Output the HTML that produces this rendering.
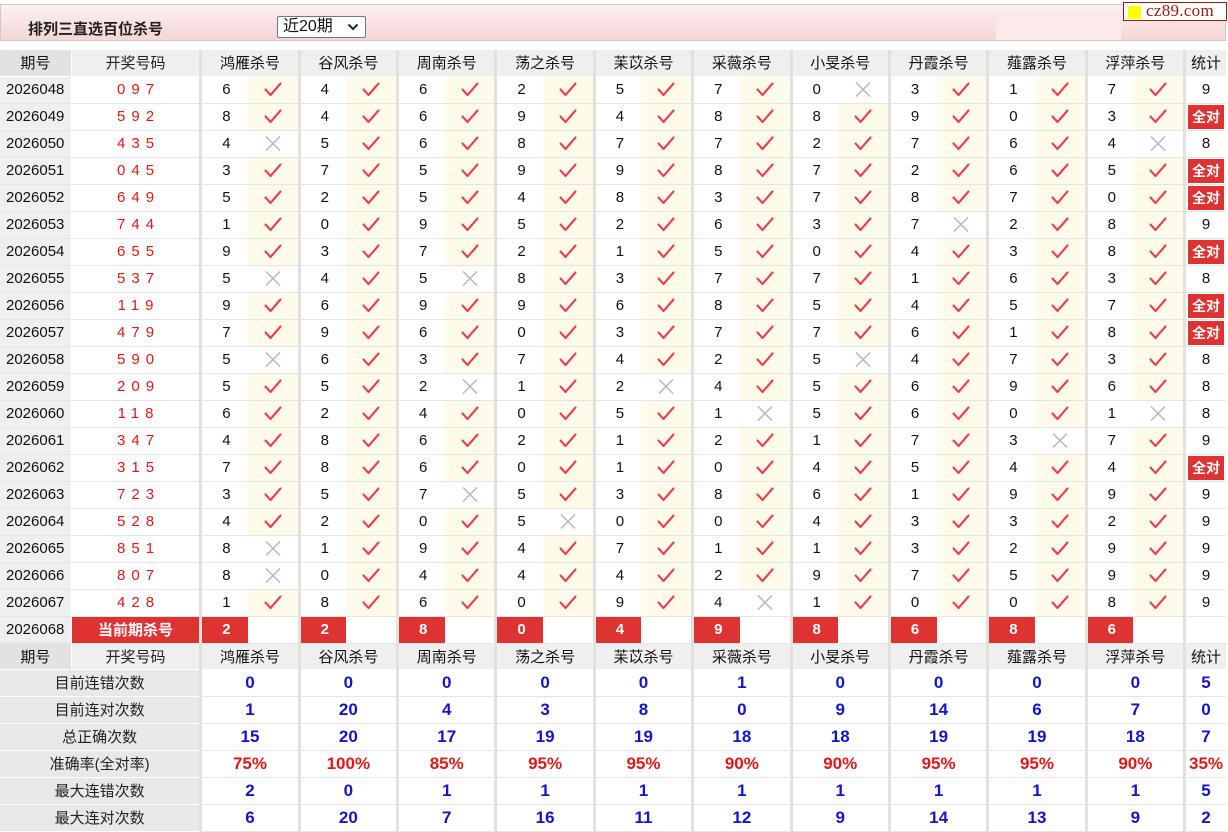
<!DOCTYPE html>
<html><head><meta charset="utf-8">
<style>
*{margin:0;padding:0;box-sizing:border-box}
body{width:1228px;height:831px;overflow:hidden;background:#fff;font-family:"Liberation Sans","Noto Sans CJK SC",sans-serif;color:#111;position:relative}
.bar{position:absolute;left:0;top:4px;width:1226px;height:37px;border:1px solid #d0c8c8;background:linear-gradient(#fdf0f0,#f4d6d6)}
.title{position:absolute;left:27px;top:13px;font-size:15px;font-weight:bold;color:#222}
.sel{position:absolute;left:276px;top:11px;width:89px;height:22px;border:1px solid #777;background:#fff;font-size:16px;padding-left:5px;line-height:20px;border-radius:2px}
.sel svg{position:absolute;right:6px;top:6px}
.pale{position:absolute;left:995px;top:14px;width:125px;height:21px;background:#fbeaea}
.logo{position:absolute;left:1123px;top:2px;width:104px;height:19px;border:1px solid #a01818;background:#fff;font-family:"Liberation Serif",serif;font-size:17px;color:#a01818;line-height:16px;padding-left:22px;letter-spacing:.3px}
.logo i{position:absolute;left:4px;top:3px;width:13px;height:13px;background:#ff0}
table{position:absolute;left:0;top:50px;border-collapse:collapse;table-layout:fixed;width:1226px}
td{height:27px;border-bottom:1px solid #e4e4e4;text-align:center;font-size:15px;padding:0;overflow:hidden;white-space:nowrap}
tr.h td{height:26px;background:#efefef;border-bottom:1px solid #fff}
tr.h td.p{background:#e2e2e2}
td.p{background:#efefef;text-align:left;padding-left:6px;font-size:15px}
tr.h td.p{text-align:center;padding-left:0}
td.c{color:#e01818;letter-spacing:6px;text-indent:6px;border-left:1px solid #fff}
td.n{border-left:3px solid #e2e2dc;text-align:left;padding-left:20px}
tr.h td.n{text-align:center;padding-left:0}
td.m{background:#fefbea}
td.w{background:#fff}
td.s{border-left:3px solid #e2e2dc}
td.r span{display:block;background:#d33;color:#fff;font-weight:bold;height:24px;line-height:24px;margin:0 2px;font-size:14px}
tr.cur td{background:#fff}
tr.cur td.p{background:#efefef}
tr.cur td.c{background:#d33;color:#fff;font-weight:bold;letter-spacing:0;text-indent:0;font-size:15px}
tr.cur td.n{background:#d33;color:#fff;font-weight:bold}
tr.st td{font-weight:bold;color:#1414c8;font-size:17px;border-bottom:1px solid #e4e4e4}
tr.st td.l{background:#e8e8e8;color:#222;font-weight:normal;font-size:15px;border-bottom:1px solid #fff}
tr.st td.n{text-align:center;padding-left:0}
tr.pct td{color:#e01818}
tr.pct td.l{color:#222}
svg.k{display:block;margin:0 auto}
</style></head><body>
<svg width="0" height="0" style="position:absolute"><defs>
<symbol id="v" viewBox="0 0 20 17"><path d="M2.5 8.5 L7.5 14 L17.5 2.5" fill="none" stroke="#e8404e" stroke-width="2.1" stroke-linecap="round" stroke-linejoin="round"/></symbol>
<symbol id="x" viewBox="0 0 20 17"><path d="M3 1.5 L17 15.5 M17 1.5 L3 15.5" fill="none" stroke="#b8b8b8" stroke-width="1.5"/></symbol>
</defs></svg>
<div class="bar"><div class="title">排列三直选百位杀号</div><div class="sel">近20期<svg width="12" height="8" viewBox="0 0 12 8"><path d="M1.5 1.5 L6 6 L10.5 1.5" fill="none" stroke="#222" stroke-width="2"/></svg></div><div class="pale"></div></div>
<div class="logo"><i></i>cz89.com</div>
<table>
<colgroup><col style="width:71px"><col style="width:129px"><col style="width:47px"><col style="width:51px"><col style="width:47px"><col style="width:51px"><col style="width:47px"><col style="width:51px"><col style="width:47px"><col style="width:51px"><col style="width:47px"><col style="width:51px"><col style="width:47px"><col style="width:51px"><col style="width:47px"><col style="width:51px"><col style="width:47px"><col style="width:51px"><col style="width:47px"><col style="width:51px"><col style="width:47px"><col style="width:51px"><col style="width:41px"></colgroup>
<tr class="h"><td class="p">期号</td><td class="c" style="color:#222;letter-spacing:0;text-indent:0">开奖号码</td><td class="n" colspan="2">鸿雁杀号</td><td class="n" colspan="2">谷风杀号</td><td class="n" colspan="2">周南杀号</td><td class="n" colspan="2">荡之杀号</td><td class="n" colspan="2">苿苡杀号</td><td class="n" colspan="2">采薇杀号</td><td class="n" colspan="2">小旻杀号</td><td class="n" colspan="2">丹霞杀号</td><td class="n" colspan="2">薤露杀号</td><td class="n" colspan="2">浮萍杀号</td><td class="s">统计</td></tr>
<tr><td class="p">2026048</td><td class="c">097</td><td class="n">6</td><td class="m"><svg class="k" width="20" height="17"><use href="#v"/></svg></td><td class="n">4</td><td class="m"><svg class="k" width="20" height="17"><use href="#v"/></svg></td><td class="n">6</td><td class="m"><svg class="k" width="20" height="17"><use href="#v"/></svg></td><td class="n">2</td><td class="m"><svg class="k" width="20" height="17"><use href="#v"/></svg></td><td class="n">5</td><td class="m"><svg class="k" width="20" height="17"><use href="#v"/></svg></td><td class="n">7</td><td class="m"><svg class="k" width="20" height="17"><use href="#v"/></svg></td><td class="n">0</td><td class="w"><svg class="k" width="20" height="17"><use href="#x"/></svg></td><td class="n">3</td><td class="m"><svg class="k" width="20" height="17"><use href="#v"/></svg></td><td class="n">1</td><td class="m"><svg class="k" width="20" height="17"><use href="#v"/></svg></td><td class="n">7</td><td class="m"><svg class="k" width="20" height="17"><use href="#v"/></svg></td><td class="s">9</td></tr>
<tr><td class="p">2026049</td><td class="c">592</td><td class="n">8</td><td class="m"><svg class="k" width="20" height="17"><use href="#v"/></svg></td><td class="n">4</td><td class="m"><svg class="k" width="20" height="17"><use href="#v"/></svg></td><td class="n">6</td><td class="m"><svg class="k" width="20" height="17"><use href="#v"/></svg></td><td class="n">9</td><td class="m"><svg class="k" width="20" height="17"><use href="#v"/></svg></td><td class="n">4</td><td class="m"><svg class="k" width="20" height="17"><use href="#v"/></svg></td><td class="n">8</td><td class="m"><svg class="k" width="20" height="17"><use href="#v"/></svg></td><td class="n">8</td><td class="m"><svg class="k" width="20" height="17"><use href="#v"/></svg></td><td class="n">9</td><td class="m"><svg class="k" width="20" height="17"><use href="#v"/></svg></td><td class="n">0</td><td class="m"><svg class="k" width="20" height="17"><use href="#v"/></svg></td><td class="n">3</td><td class="m"><svg class="k" width="20" height="17"><use href="#v"/></svg></td><td class="s r"><span>全对</span></td></tr>
<tr><td class="p">2026050</td><td class="c">435</td><td class="n">4</td><td class="w"><svg class="k" width="20" height="17"><use href="#x"/></svg></td><td class="n">5</td><td class="m"><svg class="k" width="20" height="17"><use href="#v"/></svg></td><td class="n">6</td><td class="m"><svg class="k" width="20" height="17"><use href="#v"/></svg></td><td class="n">8</td><td class="m"><svg class="k" width="20" height="17"><use href="#v"/></svg></td><td class="n">7</td><td class="m"><svg class="k" width="20" height="17"><use href="#v"/></svg></td><td class="n">7</td><td class="m"><svg class="k" width="20" height="17"><use href="#v"/></svg></td><td class="n">2</td><td class="m"><svg class="k" width="20" height="17"><use href="#v"/></svg></td><td class="n">7</td><td class="m"><svg class="k" width="20" height="17"><use href="#v"/></svg></td><td class="n">6</td><td class="m"><svg class="k" width="20" height="17"><use href="#v"/></svg></td><td class="n">4</td><td class="w"><svg class="k" width="20" height="17"><use href="#x"/></svg></td><td class="s">8</td></tr>
<tr><td class="p">2026051</td><td class="c">045</td><td class="n">3</td><td class="m"><svg class="k" width="20" height="17"><use href="#v"/></svg></td><td class="n">7</td><td class="m"><svg class="k" width="20" height="17"><use href="#v"/></svg></td><td class="n">5</td><td class="m"><svg class="k" width="20" height="17"><use href="#v"/></svg></td><td class="n">9</td><td class="m"><svg class="k" width="20" height="17"><use href="#v"/></svg></td><td class="n">9</td><td class="m"><svg class="k" width="20" height="17"><use href="#v"/></svg></td><td class="n">8</td><td class="m"><svg class="k" width="20" height="17"><use href="#v"/></svg></td><td class="n">7</td><td class="m"><svg class="k" width="20" height="17"><use href="#v"/></svg></td><td class="n">2</td><td class="m"><svg class="k" width="20" height="17"><use href="#v"/></svg></td><td class="n">6</td><td class="m"><svg class="k" width="20" height="17"><use href="#v"/></svg></td><td class="n">5</td><td class="m"><svg class="k" width="20" height="17"><use href="#v"/></svg></td><td class="s r"><span>全对</span></td></tr>
<tr><td class="p">2026052</td><td class="c">649</td><td class="n">5</td><td class="m"><svg class="k" width="20" height="17"><use href="#v"/></svg></td><td class="n">2</td><td class="m"><svg class="k" width="20" height="17"><use href="#v"/></svg></td><td class="n">5</td><td class="m"><svg class="k" width="20" height="17"><use href="#v"/></svg></td><td class="n">4</td><td class="m"><svg class="k" width="20" height="17"><use href="#v"/></svg></td><td class="n">8</td><td class="m"><svg class="k" width="20" height="17"><use href="#v"/></svg></td><td class="n">3</td><td class="m"><svg class="k" width="20" height="17"><use href="#v"/></svg></td><td class="n">7</td><td class="m"><svg class="k" width="20" height="17"><use href="#v"/></svg></td><td class="n">8</td><td class="m"><svg class="k" width="20" height="17"><use href="#v"/></svg></td><td class="n">7</td><td class="m"><svg class="k" width="20" height="17"><use href="#v"/></svg></td><td class="n">0</td><td class="m"><svg class="k" width="20" height="17"><use href="#v"/></svg></td><td class="s r"><span>全对</span></td></tr>
<tr><td class="p">2026053</td><td class="c">744</td><td class="n">1</td><td class="m"><svg class="k" width="20" height="17"><use href="#v"/></svg></td><td class="n">0</td><td class="m"><svg class="k" width="20" height="17"><use href="#v"/></svg></td><td class="n">9</td><td class="m"><svg class="k" width="20" height="17"><use href="#v"/></svg></td><td class="n">5</td><td class="m"><svg class="k" width="20" height="17"><use href="#v"/></svg></td><td class="n">2</td><td class="m"><svg class="k" width="20" height="17"><use href="#v"/></svg></td><td class="n">6</td><td class="m"><svg class="k" width="20" height="17"><use href="#v"/></svg></td><td class="n">3</td><td class="m"><svg class="k" width="20" height="17"><use href="#v"/></svg></td><td class="n">7</td><td class="w"><svg class="k" width="20" height="17"><use href="#x"/></svg></td><td class="n">2</td><td class="m"><svg class="k" width="20" height="17"><use href="#v"/></svg></td><td class="n">8</td><td class="m"><svg class="k" width="20" height="17"><use href="#v"/></svg></td><td class="s">9</td></tr>
<tr><td class="p">2026054</td><td class="c">655</td><td class="n">9</td><td class="m"><svg class="k" width="20" height="17"><use href="#v"/></svg></td><td class="n">3</td><td class="m"><svg class="k" width="20" height="17"><use href="#v"/></svg></td><td class="n">7</td><td class="m"><svg class="k" width="20" height="17"><use href="#v"/></svg></td><td class="n">2</td><td class="m"><svg class="k" width="20" height="17"><use href="#v"/></svg></td><td class="n">1</td><td class="m"><svg class="k" width="20" height="17"><use href="#v"/></svg></td><td class="n">5</td><td class="m"><svg class="k" width="20" height="17"><use href="#v"/></svg></td><td class="n">0</td><td class="m"><svg class="k" width="20" height="17"><use href="#v"/></svg></td><td class="n">4</td><td class="m"><svg class="k" width="20" height="17"><use href="#v"/></svg></td><td class="n">3</td><td class="m"><svg class="k" width="20" height="17"><use href="#v"/></svg></td><td class="n">8</td><td class="m"><svg class="k" width="20" height="17"><use href="#v"/></svg></td><td class="s r"><span>全对</span></td></tr>
<tr><td class="p">2026055</td><td class="c">537</td><td class="n">5</td><td class="w"><svg class="k" width="20" height="17"><use href="#x"/></svg></td><td class="n">4</td><td class="m"><svg class="k" width="20" height="17"><use href="#v"/></svg></td><td class="n">5</td><td class="w"><svg class="k" width="20" height="17"><use href="#x"/></svg></td><td class="n">8</td><td class="m"><svg class="k" width="20" height="17"><use href="#v"/></svg></td><td class="n">3</td><td class="m"><svg class="k" width="20" height="17"><use href="#v"/></svg></td><td class="n">7</td><td class="m"><svg class="k" width="20" height="17"><use href="#v"/></svg></td><td class="n">7</td><td class="m"><svg class="k" width="20" height="17"><use href="#v"/></svg></td><td class="n">1</td><td class="m"><svg class="k" width="20" height="17"><use href="#v"/></svg></td><td class="n">6</td><td class="m"><svg class="k" width="20" height="17"><use href="#v"/></svg></td><td class="n">3</td><td class="m"><svg class="k" width="20" height="17"><use href="#v"/></svg></td><td class="s">8</td></tr>
<tr><td class="p">2026056</td><td class="c">119</td><td class="n">9</td><td class="m"><svg class="k" width="20" height="17"><use href="#v"/></svg></td><td class="n">6</td><td class="m"><svg class="k" width="20" height="17"><use href="#v"/></svg></td><td class="n">9</td><td class="m"><svg class="k" width="20" height="17"><use href="#v"/></svg></td><td class="n">9</td><td class="m"><svg class="k" width="20" height="17"><use href="#v"/></svg></td><td class="n">6</td><td class="m"><svg class="k" width="20" height="17"><use href="#v"/></svg></td><td class="n">8</td><td class="m"><svg class="k" width="20" height="17"><use href="#v"/></svg></td><td class="n">5</td><td class="m"><svg class="k" width="20" height="17"><use href="#v"/></svg></td><td class="n">4</td><td class="m"><svg class="k" width="20" height="17"><use href="#v"/></svg></td><td class="n">5</td><td class="m"><svg class="k" width="20" height="17"><use href="#v"/></svg></td><td class="n">7</td><td class="m"><svg class="k" width="20" height="17"><use href="#v"/></svg></td><td class="s r"><span>全对</span></td></tr>
<tr><td class="p">2026057</td><td class="c">479</td><td class="n">7</td><td class="m"><svg class="k" width="20" height="17"><use href="#v"/></svg></td><td class="n">9</td><td class="m"><svg class="k" width="20" height="17"><use href="#v"/></svg></td><td class="n">6</td><td class="m"><svg class="k" width="20" height="17"><use href="#v"/></svg></td><td class="n">0</td><td class="m"><svg class="k" width="20" height="17"><use href="#v"/></svg></td><td class="n">3</td><td class="m"><svg class="k" width="20" height="17"><use href="#v"/></svg></td><td class="n">7</td><td class="m"><svg class="k" width="20" height="17"><use href="#v"/></svg></td><td class="n">7</td><td class="m"><svg class="k" width="20" height="17"><use href="#v"/></svg></td><td class="n">6</td><td class="m"><svg class="k" width="20" height="17"><use href="#v"/></svg></td><td class="n">1</td><td class="m"><svg class="k" width="20" height="17"><use href="#v"/></svg></td><td class="n">8</td><td class="m"><svg class="k" width="20" height="17"><use href="#v"/></svg></td><td class="s r"><span>全对</span></td></tr>
<tr><td class="p">2026058</td><td class="c">590</td><td class="n">5</td><td class="w"><svg class="k" width="20" height="17"><use href="#x"/></svg></td><td class="n">6</td><td class="m"><svg class="k" width="20" height="17"><use href="#v"/></svg></td><td class="n">3</td><td class="m"><svg class="k" width="20" height="17"><use href="#v"/></svg></td><td class="n">7</td><td class="m"><svg class="k" width="20" height="17"><use href="#v"/></svg></td><td class="n">4</td><td class="m"><svg class="k" width="20" height="17"><use href="#v"/></svg></td><td class="n">2</td><td class="m"><svg class="k" width="20" height="17"><use href="#v"/></svg></td><td class="n">5</td><td class="w"><svg class="k" width="20" height="17"><use href="#x"/></svg></td><td class="n">4</td><td class="m"><svg class="k" width="20" height="17"><use href="#v"/></svg></td><td class="n">7</td><td class="m"><svg class="k" width="20" height="17"><use href="#v"/></svg></td><td class="n">3</td><td class="m"><svg class="k" width="20" height="17"><use href="#v"/></svg></td><td class="s">8</td></tr>
<tr><td class="p">2026059</td><td class="c">209</td><td class="n">5</td><td class="m"><svg class="k" width="20" height="17"><use href="#v"/></svg></td><td class="n">5</td><td class="m"><svg class="k" width="20" height="17"><use href="#v"/></svg></td><td class="n">2</td><td class="w"><svg class="k" width="20" height="17"><use href="#x"/></svg></td><td class="n">1</td><td class="m"><svg class="k" width="20" height="17"><use href="#v"/></svg></td><td class="n">2</td><td class="w"><svg class="k" width="20" height="17"><use href="#x"/></svg></td><td class="n">4</td><td class="m"><svg class="k" width="20" height="17"><use href="#v"/></svg></td><td class="n">5</td><td class="m"><svg class="k" width="20" height="17"><use href="#v"/></svg></td><td class="n">6</td><td class="m"><svg class="k" width="20" height="17"><use href="#v"/></svg></td><td class="n">9</td><td class="m"><svg class="k" width="20" height="17"><use href="#v"/></svg></td><td class="n">6</td><td class="m"><svg class="k" width="20" height="17"><use href="#v"/></svg></td><td class="s">8</td></tr>
<tr><td class="p">2026060</td><td class="c">118</td><td class="n">6</td><td class="m"><svg class="k" width="20" height="17"><use href="#v"/></svg></td><td class="n">2</td><td class="m"><svg class="k" width="20" height="17"><use href="#v"/></svg></td><td class="n">4</td><td class="m"><svg class="k" width="20" height="17"><use href="#v"/></svg></td><td class="n">0</td><td class="m"><svg class="k" width="20" height="17"><use href="#v"/></svg></td><td class="n">5</td><td class="m"><svg class="k" width="20" height="17"><use href="#v"/></svg></td><td class="n">1</td><td class="w"><svg class="k" width="20" height="17"><use href="#x"/></svg></td><td class="n">5</td><td class="m"><svg class="k" width="20" height="17"><use href="#v"/></svg></td><td class="n">6</td><td class="m"><svg class="k" width="20" height="17"><use href="#v"/></svg></td><td class="n">0</td><td class="m"><svg class="k" width="20" height="17"><use href="#v"/></svg></td><td class="n">1</td><td class="w"><svg class="k" width="20" height="17"><use href="#x"/></svg></td><td class="s">8</td></tr>
<tr><td class="p">2026061</td><td class="c">347</td><td class="n">4</td><td class="m"><svg class="k" width="20" height="17"><use href="#v"/></svg></td><td class="n">8</td><td class="m"><svg class="k" width="20" height="17"><use href="#v"/></svg></td><td class="n">6</td><td class="m"><svg class="k" width="20" height="17"><use href="#v"/></svg></td><td class="n">2</td><td class="m"><svg class="k" width="20" height="17"><use href="#v"/></svg></td><td class="n">1</td><td class="m"><svg class="k" width="20" height="17"><use href="#v"/></svg></td><td class="n">2</td><td class="m"><svg class="k" width="20" height="17"><use href="#v"/></svg></td><td class="n">1</td><td class="m"><svg class="k" width="20" height="17"><use href="#v"/></svg></td><td class="n">7</td><td class="m"><svg class="k" width="20" height="17"><use href="#v"/></svg></td><td class="n">3</td><td class="w"><svg class="k" width="20" height="17"><use href="#x"/></svg></td><td class="n">7</td><td class="m"><svg class="k" width="20" height="17"><use href="#v"/></svg></td><td class="s">9</td></tr>
<tr><td class="p">2026062</td><td class="c">315</td><td class="n">7</td><td class="m"><svg class="k" width="20" height="17"><use href="#v"/></svg></td><td class="n">8</td><td class="m"><svg class="k" width="20" height="17"><use href="#v"/></svg></td><td class="n">6</td><td class="m"><svg class="k" width="20" height="17"><use href="#v"/></svg></td><td class="n">0</td><td class="m"><svg class="k" width="20" height="17"><use href="#v"/></svg></td><td class="n">1</td><td class="m"><svg class="k" width="20" height="17"><use href="#v"/></svg></td><td class="n">0</td><td class="m"><svg class="k" width="20" height="17"><use href="#v"/></svg></td><td class="n">4</td><td class="m"><svg class="k" width="20" height="17"><use href="#v"/></svg></td><td class="n">5</td><td class="m"><svg class="k" width="20" height="17"><use href="#v"/></svg></td><td class="n">4</td><td class="m"><svg class="k" width="20" height="17"><use href="#v"/></svg></td><td class="n">4</td><td class="m"><svg class="k" width="20" height="17"><use href="#v"/></svg></td><td class="s r"><span>全对</span></td></tr>
<tr><td class="p">2026063</td><td class="c">723</td><td class="n">3</td><td class="m"><svg class="k" width="20" height="17"><use href="#v"/></svg></td><td class="n">5</td><td class="m"><svg class="k" width="20" height="17"><use href="#v"/></svg></td><td class="n">7</td><td class="w"><svg class="k" width="20" height="17"><use href="#x"/></svg></td><td class="n">5</td><td class="m"><svg class="k" width="20" height="17"><use href="#v"/></svg></td><td class="n">3</td><td class="m"><svg class="k" width="20" height="17"><use href="#v"/></svg></td><td class="n">8</td><td class="m"><svg class="k" width="20" height="17"><use href="#v"/></svg></td><td class="n">6</td><td class="m"><svg class="k" width="20" height="17"><use href="#v"/></svg></td><td class="n">1</td><td class="m"><svg class="k" width="20" height="17"><use href="#v"/></svg></td><td class="n">9</td><td class="m"><svg class="k" width="20" height="17"><use href="#v"/></svg></td><td class="n">9</td><td class="m"><svg class="k" width="20" height="17"><use href="#v"/></svg></td><td class="s">9</td></tr>
<tr><td class="p">2026064</td><td class="c">528</td><td class="n">4</td><td class="m"><svg class="k" width="20" height="17"><use href="#v"/></svg></td><td class="n">2</td><td class="m"><svg class="k" width="20" height="17"><use href="#v"/></svg></td><td class="n">0</td><td class="m"><svg class="k" width="20" height="17"><use href="#v"/></svg></td><td class="n">5</td><td class="w"><svg class="k" width="20" height="17"><use href="#x"/></svg></td><td class="n">0</td><td class="m"><svg class="k" width="20" height="17"><use href="#v"/></svg></td><td class="n">0</td><td class="m"><svg class="k" width="20" height="17"><use href="#v"/></svg></td><td class="n">4</td><td class="m"><svg class="k" width="20" height="17"><use href="#v"/></svg></td><td class="n">3</td><td class="m"><svg class="k" width="20" height="17"><use href="#v"/></svg></td><td class="n">3</td><td class="m"><svg class="k" width="20" height="17"><use href="#v"/></svg></td><td class="n">2</td><td class="m"><svg class="k" width="20" height="17"><use href="#v"/></svg></td><td class="s">9</td></tr>
<tr><td class="p">2026065</td><td class="c">851</td><td class="n">8</td><td class="w"><svg class="k" width="20" height="17"><use href="#x"/></svg></td><td class="n">1</td><td class="m"><svg class="k" width="20" height="17"><use href="#v"/></svg></td><td class="n">9</td><td class="m"><svg class="k" width="20" height="17"><use href="#v"/></svg></td><td class="n">4</td><td class="m"><svg class="k" width="20" height="17"><use href="#v"/></svg></td><td class="n">7</td><td class="m"><svg class="k" width="20" height="17"><use href="#v"/></svg></td><td class="n">1</td><td class="m"><svg class="k" width="20" height="17"><use href="#v"/></svg></td><td class="n">1</td><td class="m"><svg class="k" width="20" height="17"><use href="#v"/></svg></td><td class="n">3</td><td class="m"><svg class="k" width="20" height="17"><use href="#v"/></svg></td><td class="n">2</td><td class="m"><svg class="k" width="20" height="17"><use href="#v"/></svg></td><td class="n">9</td><td class="m"><svg class="k" width="20" height="17"><use href="#v"/></svg></td><td class="s">9</td></tr>
<tr><td class="p">2026066</td><td class="c">807</td><td class="n">8</td><td class="w"><svg class="k" width="20" height="17"><use href="#x"/></svg></td><td class="n">0</td><td class="m"><svg class="k" width="20" height="17"><use href="#v"/></svg></td><td class="n">4</td><td class="m"><svg class="k" width="20" height="17"><use href="#v"/></svg></td><td class="n">4</td><td class="m"><svg class="k" width="20" height="17"><use href="#v"/></svg></td><td class="n">4</td><td class="m"><svg class="k" width="20" height="17"><use href="#v"/></svg></td><td class="n">2</td><td class="m"><svg class="k" width="20" height="17"><use href="#v"/></svg></td><td class="n">9</td><td class="m"><svg class="k" width="20" height="17"><use href="#v"/></svg></td><td class="n">7</td><td class="m"><svg class="k" width="20" height="17"><use href="#v"/></svg></td><td class="n">5</td><td class="m"><svg class="k" width="20" height="17"><use href="#v"/></svg></td><td class="n">9</td><td class="m"><svg class="k" width="20" height="17"><use href="#v"/></svg></td><td class="s">9</td></tr>
<tr><td class="p">2026067</td><td class="c">428</td><td class="n">1</td><td class="m"><svg class="k" width="20" height="17"><use href="#v"/></svg></td><td class="n">8</td><td class="m"><svg class="k" width="20" height="17"><use href="#v"/></svg></td><td class="n">6</td><td class="m"><svg class="k" width="20" height="17"><use href="#v"/></svg></td><td class="n">0</td><td class="m"><svg class="k" width="20" height="17"><use href="#v"/></svg></td><td class="n">9</td><td class="m"><svg class="k" width="20" height="17"><use href="#v"/></svg></td><td class="n">4</td><td class="w"><svg class="k" width="20" height="17"><use href="#x"/></svg></td><td class="n">1</td><td class="m"><svg class="k" width="20" height="17"><use href="#v"/></svg></td><td class="n">0</td><td class="m"><svg class="k" width="20" height="17"><use href="#v"/></svg></td><td class="n">0</td><td class="m"><svg class="k" width="20" height="17"><use href="#v"/></svg></td><td class="n">8</td><td class="m"><svg class="k" width="20" height="17"><use href="#v"/></svg></td><td class="s">9</td></tr>
<tr class="cur"><td class="p">2026068</td><td class="c">当前期杀号</td><td class="n">2</td><td></td><td class="n">2</td><td></td><td class="n">8</td><td></td><td class="n">0</td><td></td><td class="n">4</td><td></td><td class="n">9</td><td></td><td class="n">8</td><td></td><td class="n">6</td><td></td><td class="n">8</td><td></td><td class="n">6</td><td></td><td class="s"></td></tr>
<tr class="h"><td class="p">期号</td><td class="c" style="color:#222;letter-spacing:0;text-indent:0">开奖号码</td><td class="n" colspan="2">鸿雁杀号</td><td class="n" colspan="2">谷风杀号</td><td class="n" colspan="2">周南杀号</td><td class="n" colspan="2">荡之杀号</td><td class="n" colspan="2">苿苡杀号</td><td class="n" colspan="2">采薇杀号</td><td class="n" colspan="2">小旻杀号</td><td class="n" colspan="2">丹霞杀号</td><td class="n" colspan="2">薤露杀号</td><td class="n" colspan="2">浮萍杀号</td><td class="s">统计</td></tr>
<tr class="st"><td class="l" colspan="2">目前连错次数</td><td class="n" colspan="2">0</td><td class="n" colspan="2">0</td><td class="n" colspan="2">0</td><td class="n" colspan="2">0</td><td class="n" colspan="2">0</td><td class="n" colspan="2">1</td><td class="n" colspan="2">0</td><td class="n" colspan="2">0</td><td class="n" colspan="2">0</td><td class="n" colspan="2">0</td><td class="s">5</td></tr>
<tr class="st"><td class="l" colspan="2">目前连对次数</td><td class="n" colspan="2">1</td><td class="n" colspan="2">20</td><td class="n" colspan="2">4</td><td class="n" colspan="2">3</td><td class="n" colspan="2">8</td><td class="n" colspan="2">0</td><td class="n" colspan="2">9</td><td class="n" colspan="2">14</td><td class="n" colspan="2">6</td><td class="n" colspan="2">7</td><td class="s">0</td></tr>
<tr class="st"><td class="l" colspan="2">总正确次数</td><td class="n" colspan="2">15</td><td class="n" colspan="2">20</td><td class="n" colspan="2">17</td><td class="n" colspan="2">19</td><td class="n" colspan="2">19</td><td class="n" colspan="2">18</td><td class="n" colspan="2">18</td><td class="n" colspan="2">19</td><td class="n" colspan="2">19</td><td class="n" colspan="2">18</td><td class="s">7</td></tr>
<tr class="st pct"><td class="l" colspan="2">准确率(全对率)</td><td class="n" colspan="2">75%</td><td class="n" colspan="2">100%</td><td class="n" colspan="2">85%</td><td class="n" colspan="2">95%</td><td class="n" colspan="2">95%</td><td class="n" colspan="2">90%</td><td class="n" colspan="2">90%</td><td class="n" colspan="2">95%</td><td class="n" colspan="2">95%</td><td class="n" colspan="2">90%</td><td class="s">35%</td></tr>
<tr class="st"><td class="l" colspan="2">最大连错次数</td><td class="n" colspan="2">2</td><td class="n" colspan="2">0</td><td class="n" colspan="2">1</td><td class="n" colspan="2">1</td><td class="n" colspan="2">1</td><td class="n" colspan="2">1</td><td class="n" colspan="2">1</td><td class="n" colspan="2">1</td><td class="n" colspan="2">1</td><td class="n" colspan="2">1</td><td class="s">5</td></tr>
<tr class="st"><td class="l" colspan="2">最大连对次数</td><td class="n" colspan="2">6</td><td class="n" colspan="2">20</td><td class="n" colspan="2">7</td><td class="n" colspan="2">16</td><td class="n" colspan="2">11</td><td class="n" colspan="2">12</td><td class="n" colspan="2">9</td><td class="n" colspan="2">14</td><td class="n" colspan="2">13</td><td class="n" colspan="2">9</td><td class="s">2</td></tr>
</table>
</body></html>
